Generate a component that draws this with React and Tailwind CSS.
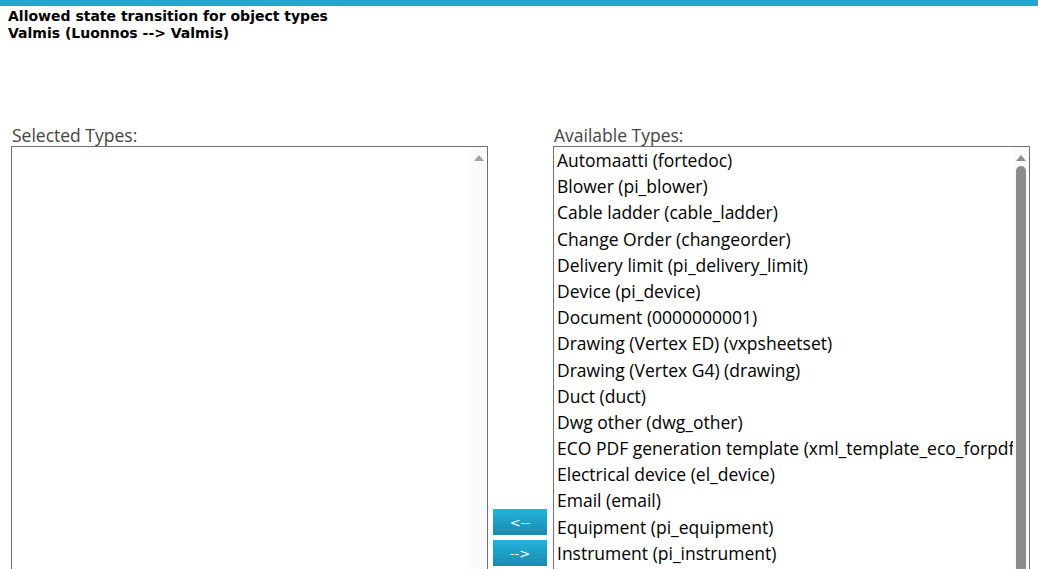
import { useState } from 'react'

const availableTypes = [
  'Automaatti (fortedoc)',
  'Blower (pi_blower)',
  'Cable ladder (cable_ladder)',
  'Change Order (changeorder)',
  'Delivery limit (pi_delivery_limit)',
  'Device (pi_device)',
  'Document (0000000001)',
  'Drawing (Vertex ED) (vxpsheetset)',
  'Drawing (Vertex G4) (drawing)',
  'Duct (duct)',
  'Dwg other (dwg_other)',
  'ECO PDF generation template (xml_template_eco_forpdf)',
  'Electrical device (el_device)',
  'Email (email)',
  'Equipment (pi_equipment)',
  'Instrument (pi_instrument)',
  'Motor (pi_motor)',
  'Part (part)',
]

const Scrollbar = ({ thumb, arrowColor }) => (
  <div className="w-[16px] shrink-0 bg-[#fafafa] flex flex-col items-center pt-[8px]">
    <div className={`w-0 h-0 border-l-[5px] border-r-[5px] border-b-[6px] border-l-transparent border-r-transparent ${arrowColor}`} />
    {thumb && <div className="mt-[5px] w-[10px] h-[500px] rounded-t-[5px] bg-[#8c8c8c]" />}
  </div>
)

const App = () => {
  const [selected] = useState([])

  return (
    <div className="h-[569px] overflow-hidden bg-white">
      <div className="h-[6px] bg-[#20a7d1]" />
      <div className="px-[8px] pt-[2px] text-[14px] leading-[17px] font-bold text-black"
        style={{ fontFamily: '"DejaVu Sans", Verdana, sans-serif' }}>
        <div>Allowed state transition for object types</div>
        <div>Valmis (Luonnos --&gt; Valmis)</div>
      </div>

      <div className="flex pl-[11px] pt-[83px]" style={{ fontFamily: '"Open Sans", "Segoe UI", sans-serif' }}>
        {/* Selected Types */}
        <div className="w-[477px] shrink-0">
          <div className="text-[17.5px] leading-[20px] text-[#444] pl-[1px] mb-[1px]">Selected Types:</div>
          <div className="h-[440px] border border-[#707070] flex">
            <div className="flex-1 overflow-hidden">
              {selected.map(s => <div key={s}>{s}</div>)}
            </div>
            <Scrollbar arrowColor="border-b-[#a3a3a3]" />
          </div>
        </div>

        {/* Move buttons */}
        <div className="w-[54px] shrink-0 ml-[5px] pt-[384px] flex flex-col gap-[5px]">
          <button className="h-[26px] w-[54px] bg-gradient-to-b from-[#22b4de] to-[#1a8aad] text-white text-[13px] leading-none"
            style={{ fontFamily: '"DejaVu Sans", Verdana, sans-serif' }}>&lt;--</button>
          <button className="h-[26px] w-[54px] bg-gradient-to-b from-[#22b4de] to-[#1a8aad] text-white text-[13px] leading-none"
            style={{ fontFamily: '"DejaVu Sans", Verdana, sans-serif' }}>--&gt;</button>
        </div>

        {/* Available Types */}
        <div className="w-[477px] shrink-0 ml-[6px]">
          <div className="text-[17.5px] leading-[20px] text-[#444] pl-[1px] mb-[1px]">Available Types:</div>
          <div className="h-[440px] border border-[#707070] flex">
            <div className="flex-1 overflow-hidden pl-[3px]">
              {availableTypes.map(t => (
                <div key={t} className="h-[26.2px] leading-[26.2px] text-[17.5px] text-black whitespace-nowrap">{t}</div>
              ))}
            </div>
            <Scrollbar thumb arrowColor="border-b-[#8c8c8c]" />
          </div>
        </div>
      </div>
    </div>
  )
}

export default App
